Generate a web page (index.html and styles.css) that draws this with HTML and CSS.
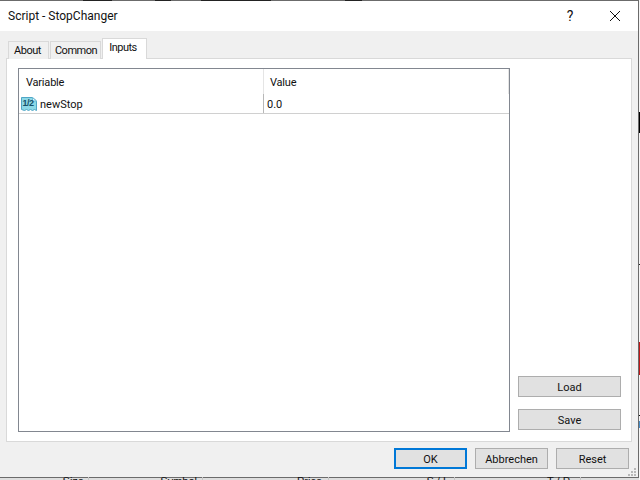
FILE: index.html
```html
<!DOCTYPE html>
<html lang="en">
<head>
<meta charset="utf-8">
<title>Script - StopChanger</title>
<link rel="stylesheet" href="styles.css">
</head>
<body>
<div class="desktop">
  <div class="under-top">
    <span class="blot b1"></span><span class="blot b2"></span><span class="blot b3"></span><span class="blot b4"></span><span class="blot b5"></span>
  </div>
  <div class="under-edge">
    <span class="mark m-black"></span><span class="mark m-tick1"></span><span class="mark m-red"></span><span class="mark m-tick3"></span><span class="mark m-blue"></span>
  </div>
  <div class="under-table">
    <span class="col c1">Size</span><span class="col c2">Symbol</span><span class="col c3">Price</span><span class="col c4">S / L</span><span class="col c5">T / P</span><span class="col c6"></span>
  </div>
  <div class="dialog">
    <header class="titlebar">
      <span class="title">Script - StopChanger</span>
      <span class="help">?</span>
      <svg class="close" width="10" height="10" viewBox="0 0 10 10"><path d="M0 0L10 10M10 0L0 10" stroke="#111" stroke-width="1" fill="none"/></svg>
    </header>
    <div class="body">
      <nav class="tabs">
        <span class="tab tab-about">About</span>
        <span class="tab tab-common">Common</span>
        <span class="tab tab-active">Inputs</span>
      </nav>
      <section class="page">
        <div class="list">
          <div class="list-head">
            <span class="cell cell-var">Variable</span>
            <span class="cell cell-val">Value</span>
          </div>
          <div class="list-row">
            <span class="cell cell-var">
              <svg class="icon" width="17" height="16" viewBox="0 0 17 16">
                <path d="M0.5 1.5H11.5L15.5 5V14.5L13.5 13.5L11.5 14.5L9.5 13.5L7.5 14.5L5.5 13.5L3.5 14.5L0.5 13.5Z" fill="#8cd8e6" stroke="#4fa6c6"/>
                <path d="M11.5 1.5V5H15.5Z" fill="#e6f7fb" stroke="#6fbcd6"/>
                <text x="1.5" y="10" class="icon-text">1/2</text>
              </svg>
              <span class="var-name">newStop</span>
            </span>
            <span class="cell cell-val">0.0</span>
          </div>
        </div>
        <div class="side">
          <button class="btn">Load</button>
          <button class="btn">Save</button>
        </div>
      </section>
      <footer class="actions">
        <button class="btn btn-wide btn-default">OK</button>
        <button class="btn btn-wide">Abbrechen</button>
        <button class="btn btn-wide">Reset</button>
      </footer>
      <svg class="grip" width="8" height="8" viewBox="0 0 8 8" fill="#b8b8b8"><rect x="6" y="0" width="2" height="2"/><rect x="3" y="3" width="2" height="2"/><rect x="6" y="3" width="2" height="2"/><rect x="0" y="6" width="2" height="2"/><rect x="3" y="6" width="2" height="2"/><rect x="6" y="6" width="2" height="2"/></svg>
    </div>
  </div>
</div>
</body>
</html>
```
FILE: styles.css
```css
* { box-sizing: border-box; }
html, body { margin: 0; padding: 0; }
body { width: 640px; height: 480px; overflow: hidden; font-family: "Roboto", "Liberation Sans", sans-serif; color: #111; }
.desktop { position: relative; width: 640px; height: 480px; background: #dedede; overflow: hidden; }

.under-top { position: absolute; z-index: 2; top: 0; left: 0; width: 640px; height: 1px; }
.blot { position: absolute; top: 0; height: 1px; background: #222; }
.b1 { left: 83px; width: 29px; }
.b2 { left: 155px; width: 16px; }
.b3 { left: 201px; width: 70px; }
.b4 { left: 345px; width: 17px; }
.b5 { left: 228px; width: 2px; }

.under-edge { position: absolute; top: 0; right: 0; width: 1px; height: 480px; background: #f4f4f4; }
.mark { position: absolute; left: 0; width: 1px; }
.m-black { top: 112px; height: 21px; background: #000; }
.m-tick1 { top: 264px; height: 1px; background: #222; }
.m-red { top: 342px; height: 33px; background: #c01818; }
.m-tick3 { top: 415px; height: 1px; background: #111; }
.m-blue { top: 421px; height: 7px; background: #4a8fc8; }

.under-table { position: absolute; z-index: 2; left: 0; bottom: 0; width: 640px; height: 3px; overflow: hidden; }
.col { position: absolute; top: -3px; height: 14px; font: 11px/14px "Liberation Sans", sans-serif; color: #111; border-right: 1px solid #c4c4c4; text-align: right; }
.c1 { left: 0; width: 89px; padding-right: 4px; }
.c2 { left: 89px; width: 114px; padding-right: 5px; }
.c3 { left: 203px; width: 126px; padding-right: 6px; }
.c4 { left: 329px; width: 126px; padding-right: 5px; }
.c5 { left: 455px; width: 126px; padding-right: 10px; }
.c6 { left: 581px; width: 59px; border-right: 0; }

.dialog { position: absolute; top: 0; left: 0; width: 639px; height: 478px; background: #f0f0f0; border: 1px solid #6b6b6b; border-left: 0; display: flex; flex-direction: column; }

.titlebar { height: 30px; flex: none; background: #fff; display: flex; align-items: center; padding: 0 18px 0 8px; }
.title { font: 12px/30px "Roboto", sans-serif; flex: 1; }
.help { font: 14px "Roboto", sans-serif; width: 10px; margin-right: 35px; text-align: center; }
.close { display: block; flex: none; }

.body { position: relative; flex: 1; display: flex; flex-direction: column; padding: 7px 6px 0 6px; }

.tabs { display: flex; height: 21px; padding-left: 2px; align-items: flex-end; position: relative; z-index: 1; margin-bottom: -1px; }
.tab { font: 11px/17px "Roboto", sans-serif; letter-spacing: -0.5px; height: 18px; background: #f0f0f0; border: 1px solid #d9d9d9; border-bottom: 0; text-align: center; margin-right: 1px; }
.tab-about { width: 41px; padding-right: 2px; }
.tab-common { width: 51px; padding-left: 1px; }
.tab-active { width: 45px; height: 21px; padding-right: 3px; background: #fff; line-height: 17px; margin-right: 0; }

.page { height: 384px; flex: none; background: #fff; border: 1px solid #d9d9d9; padding: 9px 10px 9px 11px; display: flex; }

.list { width: 492px; flex: none; border: 1px solid #828790; background: #fff; }
.list-head { height: 25px; display: flex; font: 11px/27px "Roboto", sans-serif; letter-spacing: -0.2px; }
.list-head .cell-var { width: 245px; padding-left: 7px; border-right: 1px solid #e5e5e5; }
.list-head .cell-val { flex: 1; padding-left: 6px; border-right: 1px solid #e5e5e5; }
.list-row { height: 20px; display: flex; font: 11px/21px "Roboto", sans-serif; border-bottom: 1px solid #d0d0d0; }
.list-row .cell-var { width: 245px; padding-left: 2px; display: flex; align-items: center; gap: 2px; border-right: 1px solid #b8b8b8; }
.var-name { display: block; height: 19px; }
.list-row .cell-val { flex: 1; padding-left: 3px; }
.icon { display: block; flex: none; }
.icon-text { font: bold 9px "Liberation Sans", sans-serif; letter-spacing: -0.5px; fill: #14506a; }

.side { flex: 1; display: flex; flex-direction: column; justify-content: flex-end; gap: 12px; padding-left: 8px; margin-bottom: 2px; }

.btn { display: block; width: 103px; height: 21px; padding: 1px 0 0; background: #e1e1e1; border: 1px solid #adadad; font: 11px/19px "Roboto", sans-serif; color: #111; }
.actions { display: flex; justify-content: flex-end; gap: 8px; padding: 6px 3px 0 0; }
.btn-wide { width: 73px; }
.btn-default { border: 2px solid #0078d7; line-height: 17px; }

.grip { position: absolute; right: 2px; bottom: 1px; }
```
